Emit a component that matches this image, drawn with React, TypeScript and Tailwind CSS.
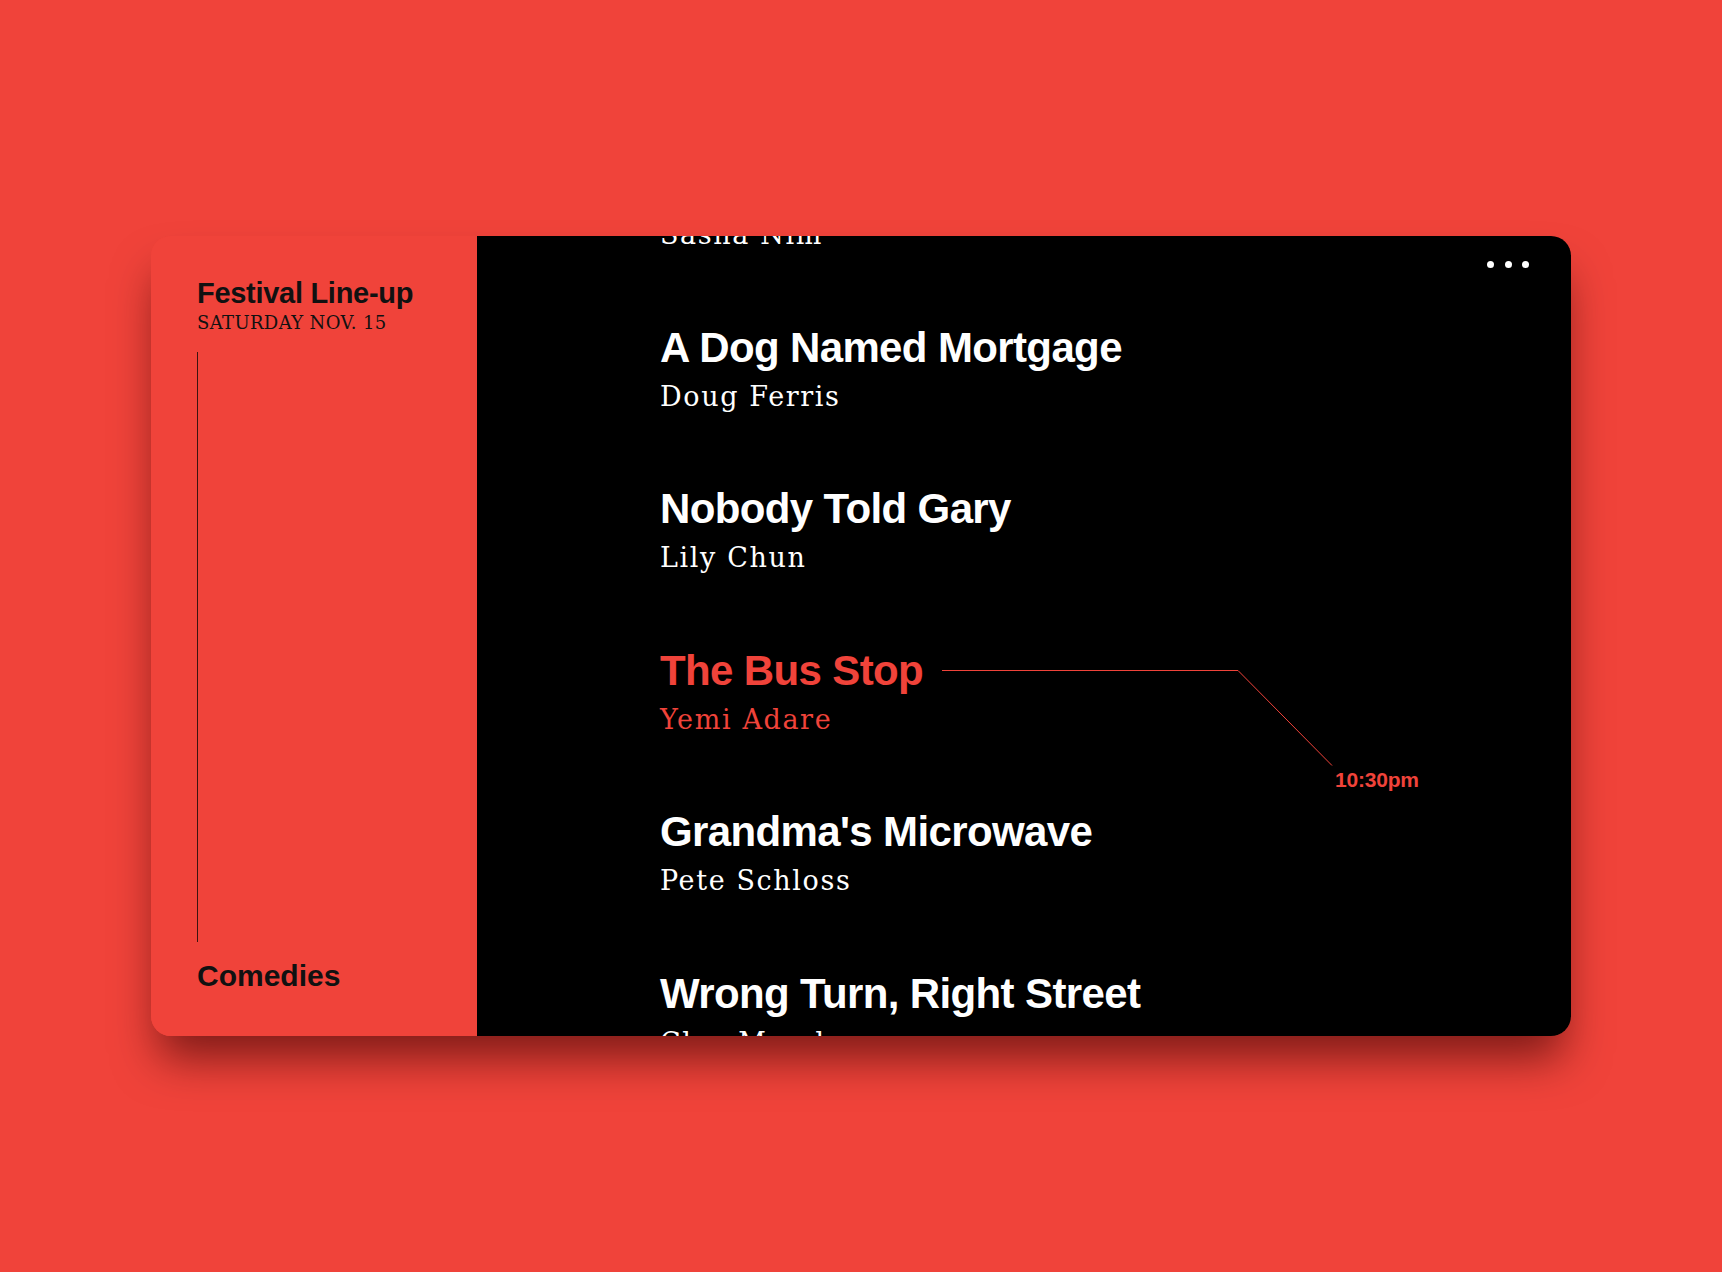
import React from "react";

interface Show {
  title: string;
  comic: string;
  time?: string;
}

const SHOWS: Show[] = [
  { title: "Late Night Leftovers", comic: "Sasha Nim" },
  { title: "A Dog Named Mortgage", comic: "Doug Ferris" },
  { title: "Nobody Told Gary", comic: "Lily Chun" },
  { title: "The Bus Stop", comic: "Yemi Adare", time: "10:30pm" },
  { title: "Grandma's Microwave", comic: "Pete Schloss" },
  { title: "Wrong Turn, Right Street", comic: "Cleo Marsh" },
];

const sans = "font-['Liberation_Sans',Arial,Helvetica,sans-serif]";
const serif = "font-['DejaVu_Serif','Liberation_Serif',serif]";

const TimeCallout = ({ time }: { time: string }) => (
  <>
    <svg
      className="absolute left-[282px] top-[20px] pointer-events-none"
      width="400"
      height="100"
      viewBox="0 0 400 100"
      fill="none"
    >
      <path d="M0 0.5 H296 L390 95.5" stroke="#F0433A" strokeWidth="1" />
    </svg>
    <span
      className={`${sans} absolute left-[675px] top-[119px] text-[21px] leading-none font-bold tracking-[-0.01em] text-[#F0433A] whitespace-nowrap`}
    >
      {time}
    </span>
  </>
);

const ShowItem = ({ show }: { show: Show }) => {
  const active = Boolean(show.time);
  return (
    <div className="relative flex flex-col">
      <h2
        className={`${sans} text-[42px] leading-[41px] font-bold tracking-[-0.015em] whitespace-nowrap ${active ? "text-[#F0433A]" : "text-white"}`}
      >
        {show.title}
      </h2>
      <p
        className={`${serif} mt-[13px] text-[27px] leading-[32px] tracking-[0.06em] whitespace-nowrap ${active ? "text-[#F0433A]" : "text-white"}`}
      >
        {show.comic}
      </p>
      {show.time && <TimeCallout time={show.time} />}
    </div>
  );
};

export default function App() {
  return (
    <div className="min-h-screen w-full bg-[#F0433A] flex items-center justify-center">
      <div className="w-[1420px] h-[800px] flex rounded-[20px] overflow-hidden shadow-[0_30px_45px_-8px_rgba(50,0,0,0.6)]">
        {/* sidebar */}
        <aside className="w-[326px] shrink-0 bg-[#F0433A] flex flex-col pt-[43px] pb-[45px] pl-[46px] text-[#111]">
          <h1 className={`${sans} text-[29px] leading-[28px] font-bold tracking-[-0.01em]`}>Festival Line-up</h1>
          <p className={`${serif} mt-[6px] text-[18px] leading-[20px] tracking-[0.02em]`}>SATURDAY NOV. 15</p>
          <div className="flex-1 w-px bg-[#3b1410] my-[19px]" />
          <h3 className={`${sans} text-[30px] leading-none font-bold`}>Comedies</h3>
        </aside>

        {/* list */}
        <section className="relative flex-1 bg-black overflow-hidden pl-[183px]">
          <div className="flex flex-col gap-[75.5px] -mt-[71px]">
            {SHOWS.map((s) => (
              <ShowItem key={s.title} show={s} />
            ))}
          </div>
          <button className="absolute top-[25px] right-[42px] flex gap-[10.5px]">
            <span className="w-[7px] h-[7px] rounded-full bg-white" />
            <span className="w-[7px] h-[7px] rounded-full bg-white" />
            <span className="w-[7px] h-[7px] rounded-full bg-white" />
          </button>
        </section>
      </div>
    </div>
  );
}
